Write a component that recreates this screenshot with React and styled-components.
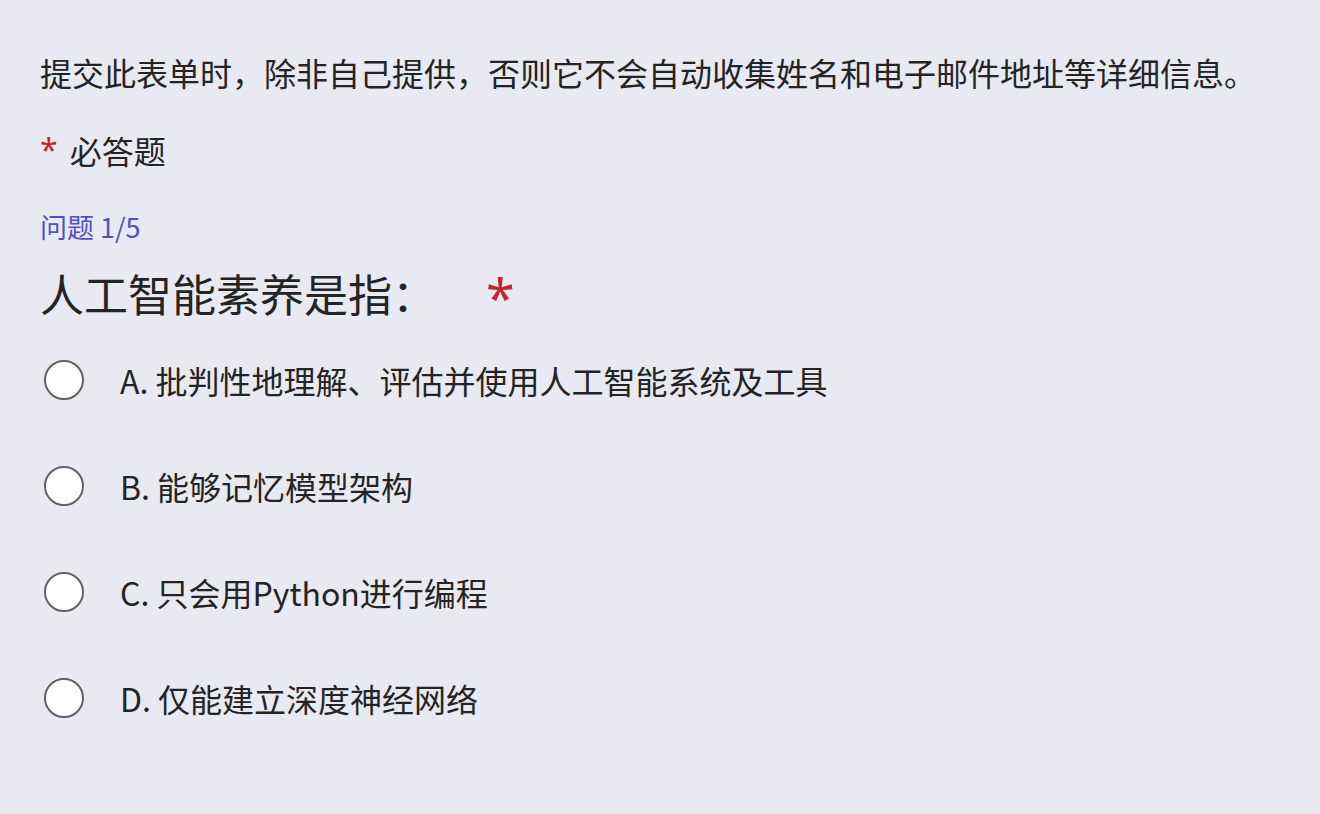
import styled, { createGlobalStyle } from "styled-components";

const GlobalStyle = createGlobalStyle`
  html, body {
    margin: 0;
    padding: 0;
    background: #e9e9f1;
  }
  body {
    font-family: "Noto Sans CJK SC", "Noto Sans", sans-serif;
    color: #242424;
  }
`;

const S = {
    Page: styled.div`
        display: flex;
        flex-direction: column;
        padding: 46px 40px 0 40px;
        min-height: 814px;
        box-sizing: border-box;
    `,
    Notice: styled.div`
        font-size: 32px;
        line-height: 52px;
        margin: 0;
    `,
    Required: styled.div`
        font-size: 32px;
        line-height: 52px;
        margin-top: 26px;
        display: flex;
        align-items: center;
        gap: 12px;
    `,
    Star: styled.span`
        font-family: "Noto Sans", sans-serif;
        color: #c4262e;
        font-size: ${(props) => props.size || "32px"};
        margin-left: ${(props) => props.gap || "0"};
        line-height: 1;
        padding-top: ${(props) => props.drop || "0"};
    `,
    Counter: styled.div`
        color: #4f52c6;
        font-size: 27px;
        line-height: 40px;
        margin-top: 31px;
    `,
    Title: styled.div`
        font-size: 44px;
        line-height: 60px;
        margin-top: 16px;
        display: flex;
        align-items: center;
    `,
    Options: styled.div`
        display: flex;
        flex-direction: column;
        gap: 54px;
        margin-top: 31px;
    `,
    Option: styled.label`
        display: flex;
        align-items: center;
        height: 52px;
        font-size: 32px;
        cursor: pointer;
    `,
    Radio: styled.span`
        width: 36px;
        height: 36px;
        border: 2px solid #616161;
        border-radius: 50%;
        background: #ffffff;
        margin-left: 4px;
        margin-right: 36px;
        flex-shrink: 0;
    `,
};

const options = [
    "A. 批判性地理解、评估并使用人工智能系统及工具",
    "B. 能够记忆模型架构",
    "C. 只会用Python进行编程",
    "D. 仅能建立深度神经网络",
];

function App() {
    return <>
        <GlobalStyle />
        <S.Page>
            <S.Notice>提交此表单时，除非自己提供，否则它不会自动收集姓名和电子邮件地址等详细信息。</S.Notice>
            <S.Required>
                <S.Star>*</S.Star>
                <span>必答题</span>
            </S.Required>
            <S.Counter>问题 1/5</S.Counter>
            <S.Title>
                <span>人工智能素养是指：</span>
                <S.Star size="52px" gap="50px" drop="8px">*</S.Star>
            </S.Title>
            <S.Options>
                {options.map((o) => (
                    <S.Option key={o}>
                        <S.Radio />
                        <span>{o}</span>
                    </S.Option>
                ))}
            </S.Options>
        </S.Page>
    </>
}

export default App;
